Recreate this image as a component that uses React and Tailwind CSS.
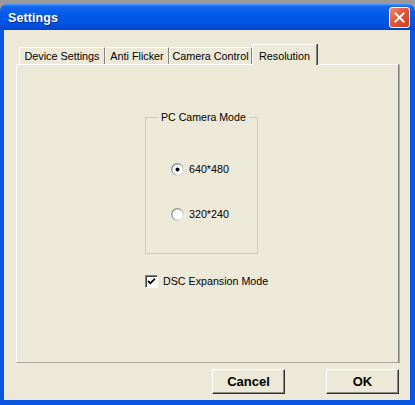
import React from "react";

const font = { fontFamily: '"Liberation Sans", Arial, sans-serif' };

function Radio({ checked }) {
  return (
    <svg width="13" height="13" viewBox="0 0 13 13" className="shrink-0">
      <defs>
        <linearGradient id={checked ? "rg1" : "rg2"} x1="0" y1="0" x2="1" y2="1">
          <stop offset="0" stopColor="#7a7a7a" />
          <stop offset="0.55" stopColor="#b8b8b0" />
          <stop offset="1" stopColor="#ffffff" />
        </linearGradient>
      </defs>
      <circle cx="6.5" cy="6.5" r="5.7" fill="#ffffff" stroke={`url(#${checked ? "rg1" : "rg2"})`} strokeWidth="1.4" />
      {checked && <circle cx="6.5" cy="6.5" r="2" fill="#000" />}
    </svg>
  );
}

function Checkbox() {
  return (
    <div className="w-[13px] h-[13px] shrink-0 border-t border-l border-t-[#808080] border-l-[#808080] border-b border-r border-b-white border-r-white bg-white shadow-[inset_1px_1px_#404040] flex items-center justify-center">
      <svg width="9" height="9" viewBox="0 0 9 9">
        <path d="M1 4 L3.3 6.3 L8 1.6" fill="none" stroke="#000" strokeWidth="1.8" />
      </svg>
    </div>
  );
}

function Tab({ label, w, active }) {
  return (
    <div
      className={
        active
          ? "w-[65px] h-[21px] bg-[#ECE9D8] border-l border-t border-l-white border-t-white border-r border-r-[#808080] shadow-[1px_0_#404040] flex items-start justify-center pt-[3px] relative z-10 -mb-[1px] text-[10.8px] text-black"
          : `${w} h-[17px] bg-[#ECE9D8] border-l border-t border-l-white border-t-white border-r border-r-[#808080] flex items-center justify-center text-[10.8px] text-black`
      }
    >
      {label}
    </div>
  );
}

function Button({ children }) {
  return (
    <div className="w-[73px] h-[25px] bg-[#ECE9D8] border-t border-l border-t-white border-l-white border-b border-r border-b-[#303030] border-r-[#303030] shadow-[inset_-1px_-1px_#8a8a8a] flex items-center justify-center text-[13px] font-bold text-black">
      {children}
    </div>
  );
}

export default function App() {
  return (
    <div className="w-[415px] h-[405px] bg-[#9a9a9a] flex flex-col overflow-hidden" style={font}>
      <div className="h-[4px] shrink-0" />
      <div className="flex-1 flex flex-col rounded-t-[7px] overflow-hidden">
        {/* Title bar */}
        <div className="h-[26px] shrink-0 flex items-center justify-between pl-[8px] pr-[5px] bg-[linear-gradient(to_bottom,#4a98ff_0%,#1468ee_10%,#0058e6_45%,#0053e0_80%,#0042cc_100%)]">
          <span className="text-white text-[12.5px] font-bold [text-shadow:1px_1px_#0a2a8a] tracking-[0.1px] pt-[2px]">Settings</span>
          <div className="w-[21px] h-[21px] rounded-[3px] border border-white bg-[linear-gradient(135deg,#f08a6a_0%,#e0583a_45%,#c8401e_100%)] flex items-center justify-center">
            <svg width="11" height="11" viewBox="0 0 11 11">
              <path d="M1.5 1.5 L9.5 9.5 M9.5 1.5 L1.5 9.5" stroke="#fff" strokeWidth="2" strokeLinecap="square" />
            </svg>
          </div>
        </div>
        {/* Body */}
        <div className="flex-1 flex flex-col bg-[#ECE9D8] border-l-[4px] border-r-[5px] border-b-[5px] border-[#0a55e2] pt-[14px] pl-[12px] pr-[11px]">
          {/* Tabs */}
          <div className="flex items-end h-[20px] pl-[3px]">
            <Tab label="Device Settings" w="w-[86px]" />
            <Tab label="Anti Flicker" w="w-[64px]" />
            <Tab label="Camera Control" w="w-[83px]" />
            <Tab label="Resolution" active />
          </div>
          {/* Panel */}
          <div className="h-[299px] shrink-0 border-l border-t border-l-white border-t-white border-r border-b border-r-[#808080] border-b-[#a8a698] shadow-[1px_0_#b0ae9f] flex flex-col pl-[128px] pt-[46px]">
            <fieldset className="w-[113px] h-[143px] border border-[#cfccbc] m-0 p-0">
              <legend className="ml-[12px] px-[3px] text-[10.6px] leading-[13px] text-black">PC Camera Mode</legend>
              <div className="flex flex-col pl-[25px] pt-[39px] gap-[32px]">
                <div className="flex items-center gap-[5px] h-[13px]">
                  <Radio checked />
                  <span className="text-[10.7px] text-black">640*480</span>
                </div>
                <div className="flex items-center gap-[5px] h-[13px]">
                  <Radio />
                  <span className="text-[10.7px] text-black">320*240</span>
                </div>
              </div>
            </fieldset>
            <div className="flex items-center gap-[5px] mt-[21px] h-[13px]">
              <Checkbox />
              <span className="text-[10.7px] text-black">DSC Expansion Mode</span>
            </div>
          </div>
          {/* Buttons */}
          <div className="flex justify-end gap-[41px] mt-[6px]">
            <Button>Cancel</Button>
            <Button>OK</Button>
          </div>
        </div>
      </div>
    </div>
  );
}
